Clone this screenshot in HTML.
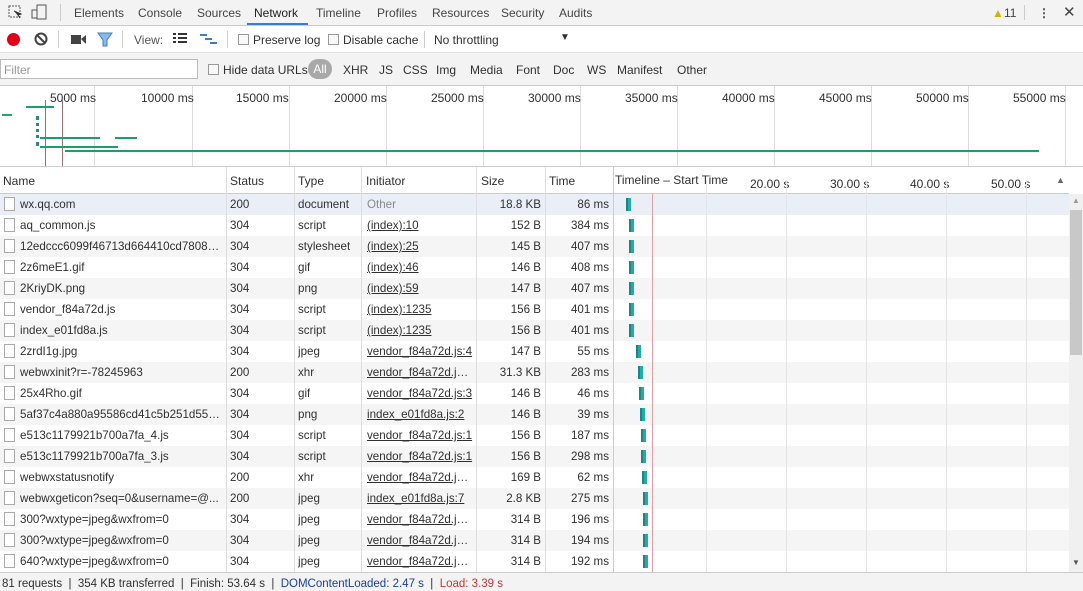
<!DOCTYPE html>
<html><head><meta charset="utf-8"><style>
*{box-sizing:border-box;margin:0;padding:0}
body{width:1083px;height:591px;overflow:hidden;font-family:"Liberation Sans",sans-serif;font-size:12px;color:#303030;background:#fff;position:relative}
.abs{position:absolute}
.t1{left:0;top:0;width:1083px;height:26px;background:#f3f3f3;border-bottom:1px solid #ccc}
.t1 span{position:absolute;top:6px;color:#444}
.t2{left:0;top:26px;width:1083px;height:27px;background:#fff;border-bottom:1px solid #e0e0e0}
.t3{left:0;top:53px;width:1083px;height:33px;background:#f3f3f3;border-bottom:1px solid #ccc}
.cb{display:inline-block;width:11px;height:11px;border:1px solid #999;background:#f8f8f8;position:absolute}
.ov{left:0;top:86px;width:1083px;height:81px;background:#fff;border-bottom:1px solid #ccc}
.hdr{left:0;top:167px;width:1069px;height:27px;background:#fff;border-bottom:1px solid #ccc}
.hdr span{position:absolute;top:7px}
.vl{position:absolute;width:1px;background:#ddd}
.row{position:absolute;left:0;width:1069px;height:21px;font-size:11.6px}
.row span{position:absolute;top:4px;white-space:nowrap;overflow:hidden;text-overflow:ellipsis}
.ic{position:absolute;left:4px;top:3px;width:11px;height:14px;border:1px solid #aaa;background:#fff}
.u{text-decoration:underline}
.bar{position:absolute;top:4px;height:13px;width:5px;background:#1ab0a8;border-left:2px solid #2a8080}
</style></head><body>
<div class="abs t1">
<svg class="abs" style="left:8px;top:5px" width="14" height="14"><rect x="1" y="1" width="11" height="11" fill="none" stroke="#555" stroke-dasharray="2,1"/><path d="M6 6 L13 9 L10 10 L12 13" stroke="#333" fill="#333"/></svg>
<svg class="abs" style="left:31px;top:4px" width="16" height="16"><rect x="6" y="1" width="9" height="14" fill="none" stroke="#555"/><rect x="1" y="6" width="5" height="8" fill="none" stroke="#555"/></svg>
<div class="abs" style="left:60px;top:4px;width:1px;height:17px;background:#ccc"></div>
<span style="left:74px">Elements</span><span style="left:138px">Console</span><span style="left:197px">Sources</span><span style="left:254px;color:#222">Network</span><span style="left:316px">Timeline</span><span style="left:377px">Profiles</span><span style="left:432px">Resources</span><span style="left:501px">Security</span><span style="left:559px">Audits</span>
<div class="abs" style="left:247px;top:23px;width:61px;height:2px;background:#3e7bd8"></div>
<span style="left:992px;color:#c9b800">▲</span><span style="left:1004px">11</span>
<div class="abs" style="left:1024px;top:5px;width:1px;height:15px;background:#ccc"></div>
<span style="left:1038px;font-weight:bold">⋮</span><span style="left:1063px;font-size:15px;top:3px">✕</span>
</div>
<div class="abs t2">
<div class="abs" style="left:7px;top:7px;width:13px;height:13px;border-radius:50%;background:#e0001a"></div>
<svg class="abs" style="left:34px;top:6px" width="14" height="14"><circle cx="7" cy="7" r="5.5" fill="none" stroke="#444" stroke-width="2"/><path d="M3 3L11 11" stroke="#444" stroke-width="2"/></svg>
<div class="abs" style="left:58px;top:5px;width:1px;height:17px;background:#ccc"></div>
<svg class="abs" style="left:71px;top:8px" width="16" height="11"><rect x="0" y="1" width="10" height="9" fill="#444"/><path d="M10 5L15 1V10Z" fill="#444"/></svg>
<svg class="abs" style="left:97px;top:6px" width="16" height="15"><path d="M1 1H15L10 8V14H6V8Z" fill="#8ab8e6" stroke="#3f7fc0"/></svg>
<div class="abs" style="left:122px;top:5px;width:1px;height:17px;background:#ccc"></div>
<span class="abs" style="left:134px;top:7px;color:#555">View:</span>
<svg class="abs" style="left:173px;top:7px" width="14" height="12"><path d="M0 1h3M5 1h9M0 5h3M5 5h9M0 9h3M5 9h9" stroke="#333" stroke-width="2"/></svg>
<svg class="abs" style="left:200px;top:7px" width="18" height="12"><path d="M0 2h7M5 6h7M10 10h7" stroke="#3f7fc0" stroke-width="2"/></svg>
<div class="abs" style="left:227px;top:5px;width:1px;height:17px;background:#ccc"></div>
<span class="cb" style="left:238px;top:8px"></span><span class="abs" style="left:253px;top:7px">Preserve log</span>
<span class="cb" style="left:328px;top:8px"></span><span class="abs" style="left:343px;top:7px">Disable cache</span>
<div class="abs" style="left:424px;top:5px;width:1px;height:17px;background:#ccc"></div>
<span class="abs" style="left:434px;top:7px">No throttling</span><span class="abs" style="left:560px;top:6px;font-size:10px">▼</span>
</div>
<div class="abs t3">
<div class="abs" style="left:0;top:6px;width:198px;height:20px;background:#fff;border:1px solid #bbb"></div>
<span class="abs" style="left:4px;top:10px;color:#999">Filter</span>
<span class="cb" style="left:208px;top:11px"></span><span class="abs" style="left:223px;top:10px">Hide data URLs</span>
<span class="abs" style="left:308px;top:6px;width:24px;height:20px;border-radius:10px;background:#a8a8a8;color:#fff;text-align:center;line-height:20px">All</span>
<span class="abs" style="left:343px;top:10px">XHR</span><span class="abs" style="left:379px;top:10px">JS</span><span class="abs" style="left:403px;top:10px">CSS</span><span class="abs" style="left:436px;top:10px">Img</span><span class="abs" style="left:470px;top:10px">Media</span><span class="abs" style="left:516px;top:10px">Font</span><span class="abs" style="left:553px;top:10px">Doc</span><span class="abs" style="left:587px;top:10px">WS</span><span class="abs" style="left:617px;top:10px">Manifest</span><span class="abs" style="left:677px;top:10px">Other</span>
</div>
<div class="abs ov">
<div class="vl" style="left:94px;top:0;height:80px"></div><div class="vl" style="left:192px;top:0;height:80px"></div><div class="vl" style="left:289px;top:0;height:80px"></div><div class="vl" style="left:386px;top:0;height:80px"></div><div class="vl" style="left:483px;top:0;height:80px"></div><div class="vl" style="left:580px;top:0;height:80px"></div><div class="vl" style="left:677px;top:0;height:80px"></div><div class="vl" style="left:774px;top:0;height:80px"></div><div class="vl" style="left:871px;top:0;height:80px"></div><div class="vl" style="left:968px;top:0;height:80px"></div><div class="vl" style="left:1065px;top:0;height:80px"></div>
<span class="abs" style="left:50px;top:5px">5000 ms</span><span class="abs" style="left:141px;top:5px">10000 ms</span><span class="abs" style="left:236px;top:5px">15000 ms</span><span class="abs" style="left:334px;top:5px">20000 ms</span><span class="abs" style="left:431px;top:5px">25000 ms</span><span class="abs" style="left:528px;top:5px">30000 ms</span><span class="abs" style="left:625px;top:5px">35000 ms</span><span class="abs" style="left:722px;top:5px">40000 ms</span><span class="abs" style="left:819px;top:5px">45000 ms</span><span class="abs" style="left:916px;top:5px">50000 ms</span><span class="abs" style="left:1013px;top:5px">55000 ms</span>
<div class="abs" style="left:45px;top:14px;width:1px;height:66px;background:#6680a0"></div>
<div class="abs" style="left:62px;top:14px;width:1px;height:66px;background:#a07070"></div>
<div class="abs" style="left:26px;top:20px;width:28px;height:2px;background:#1a9e6a"></div>
<div class="abs" style="left:2px;top:28px;width:10px;height:2px;background:#2a6"></div>
<div class="abs" style="left:36px;top:30px;width:10px;height:30px;border-left:3px dotted #2a8a8a"></div>
<div class="abs" style="left:40px;top:51px;width:60px;height:2px;background:#1a9e6a"></div>
<div class="abs" style="left:115px;top:51px;width:22px;height:2px;background:#1a9e6a"></div>
<div class="abs" style="left:40px;top:60px;width:78px;height:2px;background:#1a9e6a"></div>
<div class="abs" style="left:65px;top:64px;width:974px;height:2px;background:#1a9e6a"></div>
</div>
<div class="abs hdr">
<span style="left:3px">Name</span><span style="left:230px">Status</span><span style="left:298px">Type</span><span style="left:366px">Initiator</span><span style="left:481px">Size</span><span style="left:549px">Time</span><span style="left:615px;top:6px">Timeline – Start Time</span><span style="left:750px;top:10px">20.00 s</span><span style="left:830px;top:10px">30.00 s</span><span style="left:910px;top:10px">40.00 s</span><span style="left:991px;top:10px">50.00 s</span><span style="left:1056px;top:8px;font-size:9px;color:#666">▲</span>
</div>
<div id="rows"></div>
<div class="abs" style="left:1069px;top:194px;width:14px;height:378px;background:#f0f0f0"></div>
<div class="abs" style="left:1070px;top:210px;width:12px;height:145px;background:#c8c8c8"></div>
<span class="abs" style="left:1072px;top:196px;font-size:8px;color:#999">▲</span><span class="abs" style="left:1072px;top:558px;font-size:8px;color:#555">▼</span>
<div class="abs" style="left:0;top:572px;width:1083px;height:19px;background:#f3f3f3;border-top:1px solid #ccc"></div>
<span class="abs" style="left:2px;top:578px;font-size:11.5px;white-space:nowrap">81 requests &nbsp;|&nbsp; 354 KB transferred &nbsp;|&nbsp; Finish: 53.64 s &nbsp;|&nbsp; <span style="color:#1a3ea8">DOMContentLoaded: 2.47 s</span> &nbsp;|&nbsp; <span style="color:#c33">Load: 3.39 s</span></span>
<script>
var d=[["wx.qq.com","200","document","Other","18.8 KB","86 ms",626],
["aq_common.js","304","script","(index):10","152 B","384 ms",629],
["12edccc6099f46713d664410cd78082e...","304","stylesheet","(index):25","145 B","407 ms",629],
["2z6meE1.gif","304","gif","(index):46","146 B","408 ms",629],
["2KriyDK.png","304","png","(index):59","147 B","407 ms",629],
["vendor_f84a72d.js","304","script","(index):1235","156 B","401 ms",629],
["index_e01fd8a.js","304","script","(index):1235","156 B","401 ms",629],
["2zrdI1g.jpg","304","jpeg","vendor_f84a72d.js:4","147 B","55 ms",636],
["webwxinit?r=-78245963","200","xhr","vendor_f84a72d.js:...","31.3 KB","283 ms",638],
["25x4Rho.gif","304","gif","vendor_f84a72d.js:3","146 B","46 ms",639],
["5af37c4a880a95586cd41c5b251d5562...","304","png","index_e01fd8a.js:2","146 B","39 ms",640],
["e513c1179921b700a7fa_4.js","304","script","vendor_f84a72d.js:1","156 B","187 ms",641],
["e513c1179921b700a7fa_3.js","304","script","vendor_f84a72d.js:1","156 B","298 ms",641],
["webwxstatusnotify","200","xhr","vendor_f84a72d.js:...","169 B","62 ms",642],
["webwxgeticon?seq=0&username=@...","200","jpeg","index_e01fd8a.js:7","2.8 KB","275 ms",643],
["300?wxtype=jpeg&wxfrom=0","304","jpeg","vendor_f84a72d.js:...","314 B","196 ms",643],
["300?wxtype=jpeg&wxfrom=0","304","jpeg","vendor_f84a72d.js:...","314 B","194 ms",643],
["640?wxtype=jpeg&wxfrom=0","304","jpeg","vendor_f84a72d.js:...","314 B","192 ms",643]];
var h="";
for(var i=0;i<d.length;i++){var r=d[i],y=194+i*21;
var bg=i==0?"#e9eef7":(i%2?"#fff":"#f5f5f5");
h+='<div class="row" style="top:'+y+'px;background:'+bg+'"><div class="ic"></div>'+
'<span style="left:20px;width:204px">'+r[0].replace(/&/g,"&amp;")+'</span><span style="left:230px">'+r[1]+'</span><span style="left:298px">'+r[2]+'</span>'+
'<span style="left:367px;width:106px;'+(i==0?'color:#888':'')+'" class="'+(i?'u':'')+'">'+r[3]+'</span>'+
'<span style="right:'+(1069-541)+'px">'+r[4]+'</span><span style="right:'+(1069-609)+'px">'+r[5]+'</span>'+
'<div class="bar" style="left:'+r[6]+'px"></div></div>';}
h+='<div class="vl" style="left:226px;top:167px;height:405px"></div><div class="vl" style="left:294px;top:167px;height:405px"></div><div class="vl" style="left:361px;top:167px;height:405px"></div><div class="vl" style="left:476px;top:167px;height:405px"></div><div class="vl" style="left:545px;top:167px;height:405px"></div><div class="vl" style="left:613px;top:167px;height:405px;background:#ccc"></div>';
[706,786,866,946,1026].forEach(function(x){h+='<div class="vl" style="left:'+x+'px;top:180px;height:392px;background:#e4e4e4"></div>'});
h+='<div class="vl" style="left:652px;top:194px;height:378px;background:#e0a0a0"></div>';
document.getElementById("rows").innerHTML=h;
</script>
</body></html>
